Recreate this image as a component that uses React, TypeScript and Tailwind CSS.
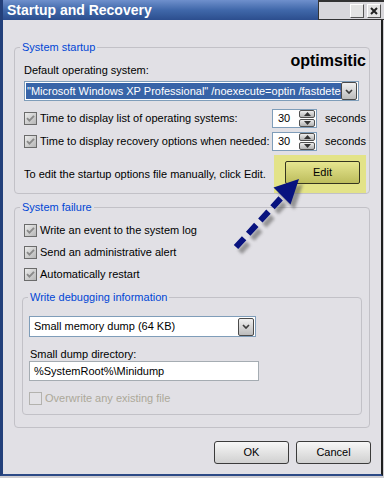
import React from "react";

const Check = ({ disabled = false }: { disabled?: boolean }) =>
  disabled ? (
    <span className="h-[13px] w-[13px] shrink-0 border border-[#b3b2ae] bg-[#e3e2e6]" />
  ) : (
    <span className="flex h-[13px] w-[13px] shrink-0 items-center justify-center border border-[#6b6b6b] bg-linear-to-br from-[#ececec] to-[#b6b6b6]">
      <svg width="9" height="9" viewBox="0 0 9 9">
        <path d="M1 4.2 L3.4 6.6 L8 1.8" stroke="#8a8a8a" strokeWidth="1.9" fill="none" />
      </svg>
    </span>
  );

const SpinButton = ({ up }: { up?: boolean }) => (
  <span className="flex h-[8px] w-[16px] items-center justify-center rounded-[2px] border border-[#505050] bg-linear-to-b from-[#eeeeee] to-[#b2b2b2]">
    <svg width="7" height="4" viewBox="0 0 7 4">
      <path d={up ? "M0 4 L3.5 0 L7 4Z" : "M0 0 L3.5 4 L7 0Z"} fill="#333" />
    </svg>
  </span>
);

const Spin = () => (
  <div className="flex h-[19px] w-[45px] items-center border border-[#7f9db9] bg-white pr-[1px]">
    <span className="flex-1 pl-[5px] leading-[17px]">30</span>
    <span className="flex flex-col gap-[1px]">
      <SpinButton up />
      <SpinButton />
    </span>
  </div>
);

const DropButton = () => (
  <span className="flex h-[18px] w-[16px] shrink-0 items-center justify-center rounded-[2px] border border-[#4a4a4a] bg-linear-to-b from-[#f0f0f0] to-[#bcbcbc]">
    <svg width="8" height="5" viewBox="0 0 8 5">
      <path d="M1 1 L4 4 L7 1" stroke="#3c3c3c" strokeWidth="1.7" fill="none" />
    </svg>
  </span>
);

const Button = ({ children }: { children: React.ReactNode }) => (
  <button className="flex h-[23px] w-[75px] items-center justify-center rounded-[3px] border border-[#3b3b3b] bg-linear-to-b from-[#f7f7f7] to-[#d0d0d0] text-[11px] leading-none text-black">
    {children}
  </button>
);

const Legend = ({ children, className }: { children: React.ReactNode; className: string }) => (
  <legend className={`px-[2px] leading-[13px] text-[#0046d5] ${className}`}>{children}</legend>
);

const TimeRow = ({ label }: { label: string }) => (
  <div className="flex h-[19px] items-center">
    <Check />
    <span className="ml-[3px] w-[232px]">{label}</span>
    <Spin />
    <span className="ml-[8px]">seconds</span>
  </div>
);

const CheckRow = ({ label }: { label: string }) => (
  <div className="flex h-[22px] items-center">
    <Check />
    <span className="ml-[3px]">{label}</span>
  </div>
);

export default function App() {
  return (
    <div className="relative flex h-[478px] w-[384px] flex-col overflow-hidden bg-[#cfced2] font-['Liberation_Sans',Arial,sans-serif] text-[11px] text-black">
      {/* title bar */}
      <div className="flex h-[20px] shrink-0">
        <div className="flex w-[318px] items-center border-l-[3px] border-[#23407a] bg-linear-to-b from-[#6f90cc] via-[#4068aa] to-[#2c4e8e] pl-[4px] text-[14px] font-bold text-white">
          Startup and Recovery
        </div>
        <div className="flex flex-1 items-start gap-[3px] border-t-[2px] border-l border-b border-[#333] bg-[#d8d7db] pt-[2px] pl-[31px]">
          <span className="h-[14px] w-[14px] border border-t-white border-l-white border-r-[#555] border-b-[#555] bg-[#e4e4e4]" />
          <span className="flex h-[14px] w-[14px] items-center justify-center border border-t-white border-l-white border-r-[#555] border-b-[#555] bg-[#e4e4e4]">
            <svg width="8" height="8" viewBox="0 0 8 8">
              <path d="M1 1 L7 7 M7 1 L1 7" stroke="#222" strokeWidth="2" />
            </svg>
          </span>
        </div>
      </div>

      {/* body */}
      <div className="flex w-[383px] flex-1 flex-col border-r-[2px] border-l-[3px] border-b-[2px] border-r-[#1e1e1e] border-l-[#23407a] border-b-[#2c4a86] bg-[#e1e0e5] pl-[11px] pt-[21px]">
        <fieldset className="w-[356px] rounded-[4px] border border-[#c2c1c7] pl-[9px] pr-[3px]">
          <Legend className="ml-[-4px]">System startup</Legend>
          <div className="flex h-[23px] justify-between">
            <span className="self-end leading-[14px]">Default operating system:</span>
            <span className="-mt-[1px] text-[16px] font-bold leading-[16px]">optimsitic</span>
          </div>
          <div className="mt-[4px] flex h-[20px] w-[335px] items-center border border-[#7f9db9] bg-white pl-[1px] pr-[1px]">
            <span className="h-[16px] w-[315px] overflow-hidden whitespace-nowrap bg-[#3864a8] pl-[1px] leading-[16px] text-white">
              "Microsoft Windows XP Professional" /noexecute=optin /fastdetect
            </span>
            <span className="flex-1" />
            <DropButton />
          </div>
          <div className="mt-[8px]">
            <TimeRow label="Time to display list of operating systems:" />
          </div>
          <div className="mt-[4px]">
            <TimeRow label="Time to display recovery options when needed:" />
          </div>
          <div className="mt-[4px] flex h-[38px] items-center justify-between">
            <span>To edit the startup options file manually, click Edit.</span>
            <div className="h-[38px] w-[92px] bg-[#e3e388] pl-[11px] pt-[6px]">
              <button className="flex h-[23px] w-[75px] items-center justify-center rounded-[2px] border border-[#35351f] bg-linear-to-b from-[#e6e690] to-[#bdbd5c] text-[11px] leading-none text-black">
                Edit
              </button>
            </div>
          </div>
        </fieldset>

        <fieldset className="mt-[7px] w-[356px] rounded-[4px] border border-[#c2c1c7] pl-[7px] pr-[7px] pb-[12px]">
          <Legend className="ml-[-2px]">System failure</Legend>
          <div className="pl-[2px] pt-[5px]">
            <CheckRow label="Write an event to the system log" />
            <CheckRow label="Send an administrative alert" />
            <CheckRow label="Automatically restart" />
          </div>
          <fieldset className="mt-[6px] rounded-[4px] border border-[#c2c1c7] pl-[6px] pb-[9px]">
            <Legend className="ml-[-1px]">Write debugging information</Legend>
            <div className="mt-[12px] flex h-[21px] w-[227px] items-center border border-[#7f9db9] bg-white pl-[4px] pr-[1px]">
              <span className="flex-1">Small memory dump (64 KB)</span>
              <DropButton />
            </div>
            <div className="mt-[11px] pl-[1px] leading-[13px]">Small dump directory:</div>
            <div className="flex h-[20px] w-[230px] items-center border border-[#a5acb2] bg-white pl-[4px]">
              %SystemRoot%\Minidump
            </div>
            <div className="mt-[10px] flex h-[14px] items-center">
              <Check disabled />
              <span className="ml-[3px] text-[#aca899]">Overwrite any existing file</span>
            </div>
          </fieldset>
        </fieldset>

        <div className="mt-[13px] flex w-[357px] justify-end gap-[7px]">
          <Button>OK</Button>
          <Button>Cancel</Button>
        </div>
      </div>
      <div className="h-[2px] shrink-0" />

      {/* annotation arrow */}
      <svg className="pointer-events-none absolute left-0 top-0" width="384" height="478" viewBox="0 0 384 478">
        <defs>
          <filter id="soft" x="-20%" y="-20%" width="140%" height="140%">
            <feGaussianBlur stdDeviation="1.6" />
          </filter>
        </defs>
        <g transform="translate(4 5)" filter="url(#soft)" opacity="0.55">
          <line x1="236" y1="247" x2="281" y2="198" stroke="#555" strokeWidth="6" strokeDasharray="12 6" />
          <polygon points="299,179 273.5,187.5 290.5,204.5" fill="#555" />
        </g>
        <line x1="236" y1="247" x2="281" y2="198" stroke="#08137f" strokeWidth="6" strokeDasharray="12 6" />
        <polygon points="299,179 273.5,187.5 290.5,204.5" fill="#08137f" />
      </svg>
    </div>
  );
}
